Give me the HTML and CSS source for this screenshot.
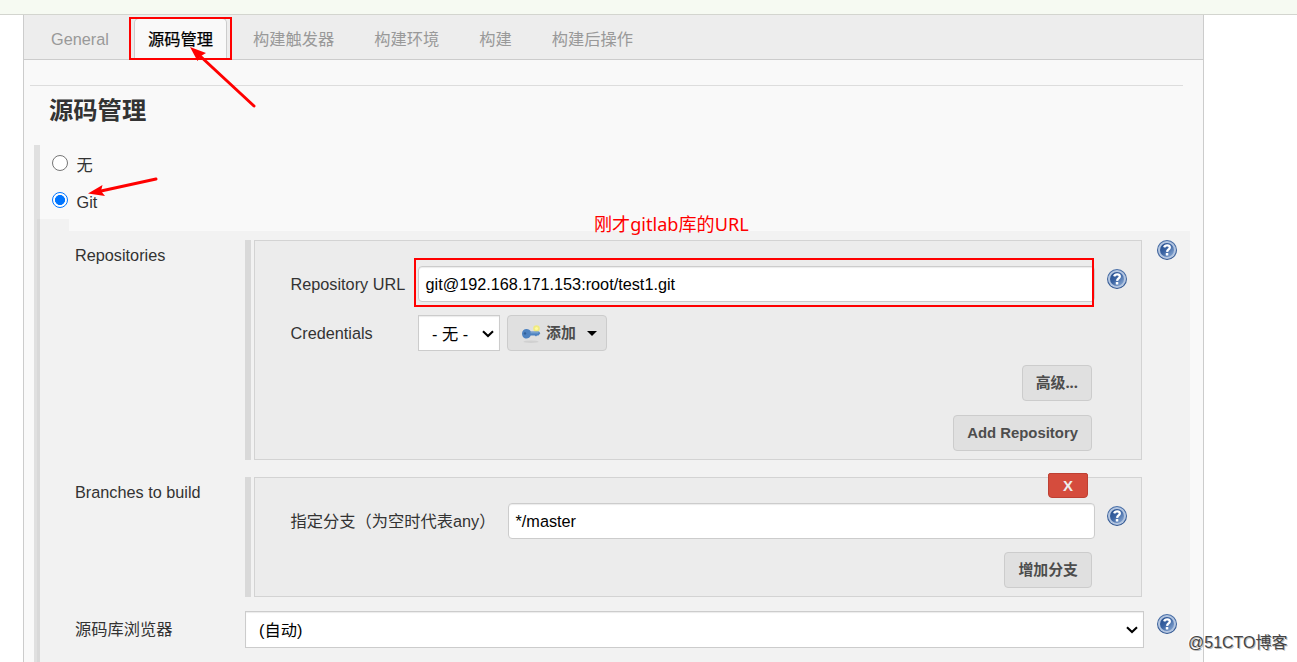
FILE: index.html
```html
<!DOCTYPE html>
<html lang="zh-CN">
<head>
<meta charset="utf-8">
<title>源码管理</title>
<link rel="stylesheet" href="styles.css">
</head>
<body>
<svg class="defs" width="0" height="0">
  <defs>
    <linearGradient id="disc" x1="0" y1="0" x2="1" y2="1"><stop offset="0" stop-color="#234c8c"/><stop offset=".45" stop-color="#3a63a2"/><stop offset="1" stop-color="#94b2da"/></linearGradient>
    <linearGradient id="rim" x1="0" y1="0" x2="0" y2="1"><stop offset="0" stop-color="#4a70a8"/><stop offset="1" stop-color="#2c528e"/></linearGradient>
    <symbol id="help" viewBox="0 0 20 20">
      <circle cx="10" cy="10" r="10" fill="url(#rim)"/>
      <circle cx="10" cy="10" r="9" fill="#b3c5e0"/>
      <circle cx="10" cy="10" r="7" fill="url(#disc)"/>
      <path d="M7.200 7.300C8 4.700 12.700 4.700 12.800 7.400C12.800 9.400 10.200 9.400 10.100 11.900" fill="none" stroke="#fff" stroke-width="2.3"/>
      <rect x="8.800" y="13.100" width="2.500" height="2.500" rx=".5" fill="#fff"/>
    </symbol>
    <symbol id="chevron" viewBox="0 0 12 8"><path d="M1 1.3L6 6L11 1.3" fill="none" stroke="#000" stroke-width="2.1"/></symbol>
  </defs>
</svg>
<div class="topbar"></div>
<main class="panel">
  <nav class="tabs">
    <a class="tab general">General</a>
    <a class="tab active">源码管理</a>
    <a class="tab">构建触发器</a>
    <a class="tab">构建环境</a>
    <a class="tab">构建</a>
    <a class="tab">构建后操作</a>
  </nav>
  <h2 class="title">源码管理</h2>
  <section class="scm">
    <label class="choice"><span class="radio"></span><span>无</span></label>
    <label class="choice second"><span class="radio checked"></span><span>Git</span></label>
    <div class="indent"></div>
    <div class="git">
      <div class="row repos">
        <div class="name">Repositories</div>
        <div class="handle"></div>
        <div class="box">
          <div class="field">
            <span class="caption">Repository URL</span>
            <div class="input">git@192.168.171.153:root/test1.git</div>
            <svg class="help"><use href="#help"/></svg>
          </div>
          <div class="field creds">
            <span class="caption">Credentials</span>
            <div class="select small"><span>- 无 -</span><svg class="chevron"><use href="#chevron"/></svg></div>
            <div class="button add">
              <svg class="key" viewBox="0 0 20 20">
                <ellipse cx="10" cy="17.700" rx="7.500" ry="1.200" fill="#d0d0d0"/>
                <circle cx="15.500" cy="4.500" r="3.300" fill="#f0ea80"/>
                <circle cx="15.500" cy="4.500" r="1.600" fill="#fffb9c"/>
                <path d="M1 9.500C1 6.800 3 5 5.500 5C7.600 5 9.200 6.200 9.700 7.500H18L19.300 9.200L17.500 11.500H16L15 12.500L13.800 11.500H9.700C9 13.500 7.400 14.500 5.500 14.500C3 14.500 1 12.500 1 9.500Z" fill="#4d82c0"/>
                <circle cx="4" cy="9.400" r="1.200" fill="#315f98"/>
                <path d="M9.500 8.800H17.500" stroke="#86add7"/>
              </svg>
              <span>添加</span><i class="caret"></i>
            </div>
          </div>
          <div class="actions first"><div class="button">高级...</div></div>
          <div class="actions"><div class="button latin">Add Repository</div></div>
        </div>
        <svg class="help"><use href="#help"/></svg>
      </div>
      <div class="row branches">
        <div class="name">Branches to build</div>
        <div class="handle"></div>
        <div class="box">
          <div class="delete">X</div>
          <div class="field">
            <span class="caption wide">指定分支（为空时代表any）</span>
            <div class="input">*/master</div>
            <svg class="help"><use href="#help"/></svg>
          </div>
          <div class="actions"><div class="button">增加分支</div></div>
        </div>
      </div>
      <div class="row browser">
        <div class="name">源码库浏览器</div>
        <div class="select"><span>(自动)</span><svg class="chevron"><use href="#chevron"/></svg></div>
        <svg class="help"><use href="#help"/></svg>
      </div>
    </div>
  </section>
</main>
<div class="mark tab-mark"></div>
<div class="mark url-mark"></div>
<div class="note">刚才gitlab库的URL</div>
<svg class="arrows" viewBox="0 0 300 220">
  <g fill="none" stroke="#f00" stroke-width="3" stroke-linecap="round"><path d="M254 106L199 55"/><path d="M156 179L101 191"/></g>
  <path d="M190 47L206 53L201 56L197.500 61Z" fill="#f00"/>
  <path d="M88 193.500L102.500 185L101 191L105 196Z" fill="#f00"/>
</svg>
<div class="watermark">@51CTO博客</div>
</body>
</html>
```
FILE: styles.css
```css
* { box-sizing: border-box; }
body {
  margin: 0;
  width: 1297px;
  height: 662px;
  overflow: hidden;
  position: relative;
  background: #fff;
  color: #333;
  font: 16.25px/24px "Liberation Sans", "Noto Sans CJK SC", sans-serif;
}
.defs { position: absolute; }
.topbar { height: 15px; background: #f6faf2; border-bottom: 1px solid #d3d5cf; }
.panel {
  width: 1181px;
  height: 647px;
  margin-left: 23px;
  overflow: hidden;
  background: #f9f9f9;
  border: solid #ccc;
  border-width: 0 1px;
}
.tabs {
  display: flex;
  height: 45px;
  padding-left: 7px;
  background: #ededed;
  border-bottom: 1px solid #ccc;
  color: #999;
}
.tab { flex: none; padding: 12px 20px 0; white-space: nowrap; }
.general { width: 103px; }
.active {
  width: 93px;
  height: 42px;
  margin: 3px 6px 0 0;
  padding: 8px 0 0 13px;
  background: #f9f9f9;
  border: 1px solid #ccc;
  border-bottom: 0;
  border-radius: 5px 5px 0 0;
  color: #000;
  -webkit-text-stroke: .25px #000;
}
.title {
  width: 1153px;
  height: 60px;
  margin: 25px 0 0 6px;
  padding: 7px 0 0 19px;
  border-top: 1px solid #ddd;
  font-size: 24.3px;
  line-height: 36px;
}
.scm { height: 520px; margin-left: 10px; border-left: 6px solid #e0e0e0; }
.choice { display: flex; gap: 8.5px; height: 37px; padding: 8px 0 0 12px; }
.radio { width: 16px; height: 16px; margin-top: 2px; border: 1px solid #767676; border-radius: 50%; background: #fff; }
.checked { border: 1.5px solid #0075ff; background: radial-gradient(circle, #0075ff 4.7px, #fff 5.3px); }
.indent { width: 32px; height: 12px; margin-left: -3px; background: rgba(0, 0, 0, .028); }
.git { width: 1153px; height: 440px; margin-left: -3px; padding: 9px 0 0 38px; background: rgba(0, 0, 0, .028); }
.row { display: flex; }
.name { width: 170px; padding-top: 3px; }
.handle { width: 6px; background: #d9d9d9; }
.box { width: 888px; margin-left: 3px; padding-left: 35.5px; background: #ececec; border: 1px solid #d3d3d3; }
.repos { height: 220px; margin-bottom: 17px; }
.repos .box { padding-top: 25px; }
.row > .help { margin-left: 15px; }
.help { display: block; flex: none; width: 20px; height: 20px; }
.field { display: flex; height: 36px; }
.caption { flex: none; width: 127.5px; padding-top: 6px; white-space: nowrap; }
.wide { width: 217.5px; }
.input {
  flex: none;
  width: 677px;
  height: 36px;
  padding: 5px 6.5px;
  background: #fff;
  border: 1px solid #ccc;
  border-radius: 4px;
  box-shadow: inset 0 1px 1px rgba(0, 0, 0, .08);
  color: #000;
}
.field .help { margin: 3px 0 0 12px; }
.creds { margin-top: 13px; }
.select {
  display: flex;
  align-items: center;
  justify-content: space-between;
  width: 899px;
  height: 37px;
  padding: 1px 5px 0 13px;
  background: #fff;
  border: 1px solid #ccc;
  box-shadow: inset 0 1px 1px rgba(0, 0, 0, .08);
  color: #000;
}
.small { width: 82px; height: 36px; padding-right: 5px; }
.chevron { width: 12px; height: 8px; }
.button {
  height: 36px;
  padding: 4px 13px 0;
  background: #e0e0e0;
  border: 1px solid #ccc;
  border-radius: 4px;
  color: #4d4d4d;
  font: bold 14.9px/24px "Noto Sans", "Noto Sans CJK SC", sans-serif;
  white-space: nowrap;
}
.latin { padding-top: 5px; font-family: "Liberation Sans", sans-serif; }
.add { display: flex; width: 100px; margin-left: 7px; }
.key { width: 20px; height: 20px; margin: 4px 4px 0 0; flex: none; }
.add span { margin-left: 1px; }
.caret { margin: 11px 0 0 11px; width: 0; height: 0; border: 5px solid transparent; border-top-color: #000; border-bottom: 0; }
.actions { display: flex; justify-content: flex-end; margin-top: 14px; padding-right: 49px; }
.branches { height: 120px; margin-bottom: 14px; }
.delete {
  width: 40px;
  height: 25px;
  margin: -5px 0 5px 757.5px;
  background: #d54c3d;
  border: 1px solid #be4033;
  border-radius: 2px 2px 4px 4px;
  color: #eee;
  font: bold 15px/23px "Liberation Sans", sans-serif;
  text-align: center;
}
.branches .input { width: 587px; }
.branches .actions { margin-top: 13px; }
.browser .name { padding-top: 6px; }
.browser .help { margin: 3px 0 0 13px; }
.mark { position: absolute; border: 2px solid #f00; }
.tab-mark { left: 129px; top: 17px; width: 103px; height: 43px; }
.url-mark { left: 414px; top: 258px; width: 680px; height: 49px; }
.note { position: absolute; left: 594px; top: 211px; color: #f00; font: 18.1px/26px "Noto Sans", "Noto Sans CJK SC", sans-serif; white-space: nowrap; }
.arrows { position: absolute; left: 0; top: 0; width: 300px; height: 220px; }
.watermark { position: absolute; left: 1188px; top: 631px; color: #444; font-size: 16px; text-shadow: 1px 1px 0 #bbb, -1px -1px 0 #fff; white-space: nowrap; }
```
